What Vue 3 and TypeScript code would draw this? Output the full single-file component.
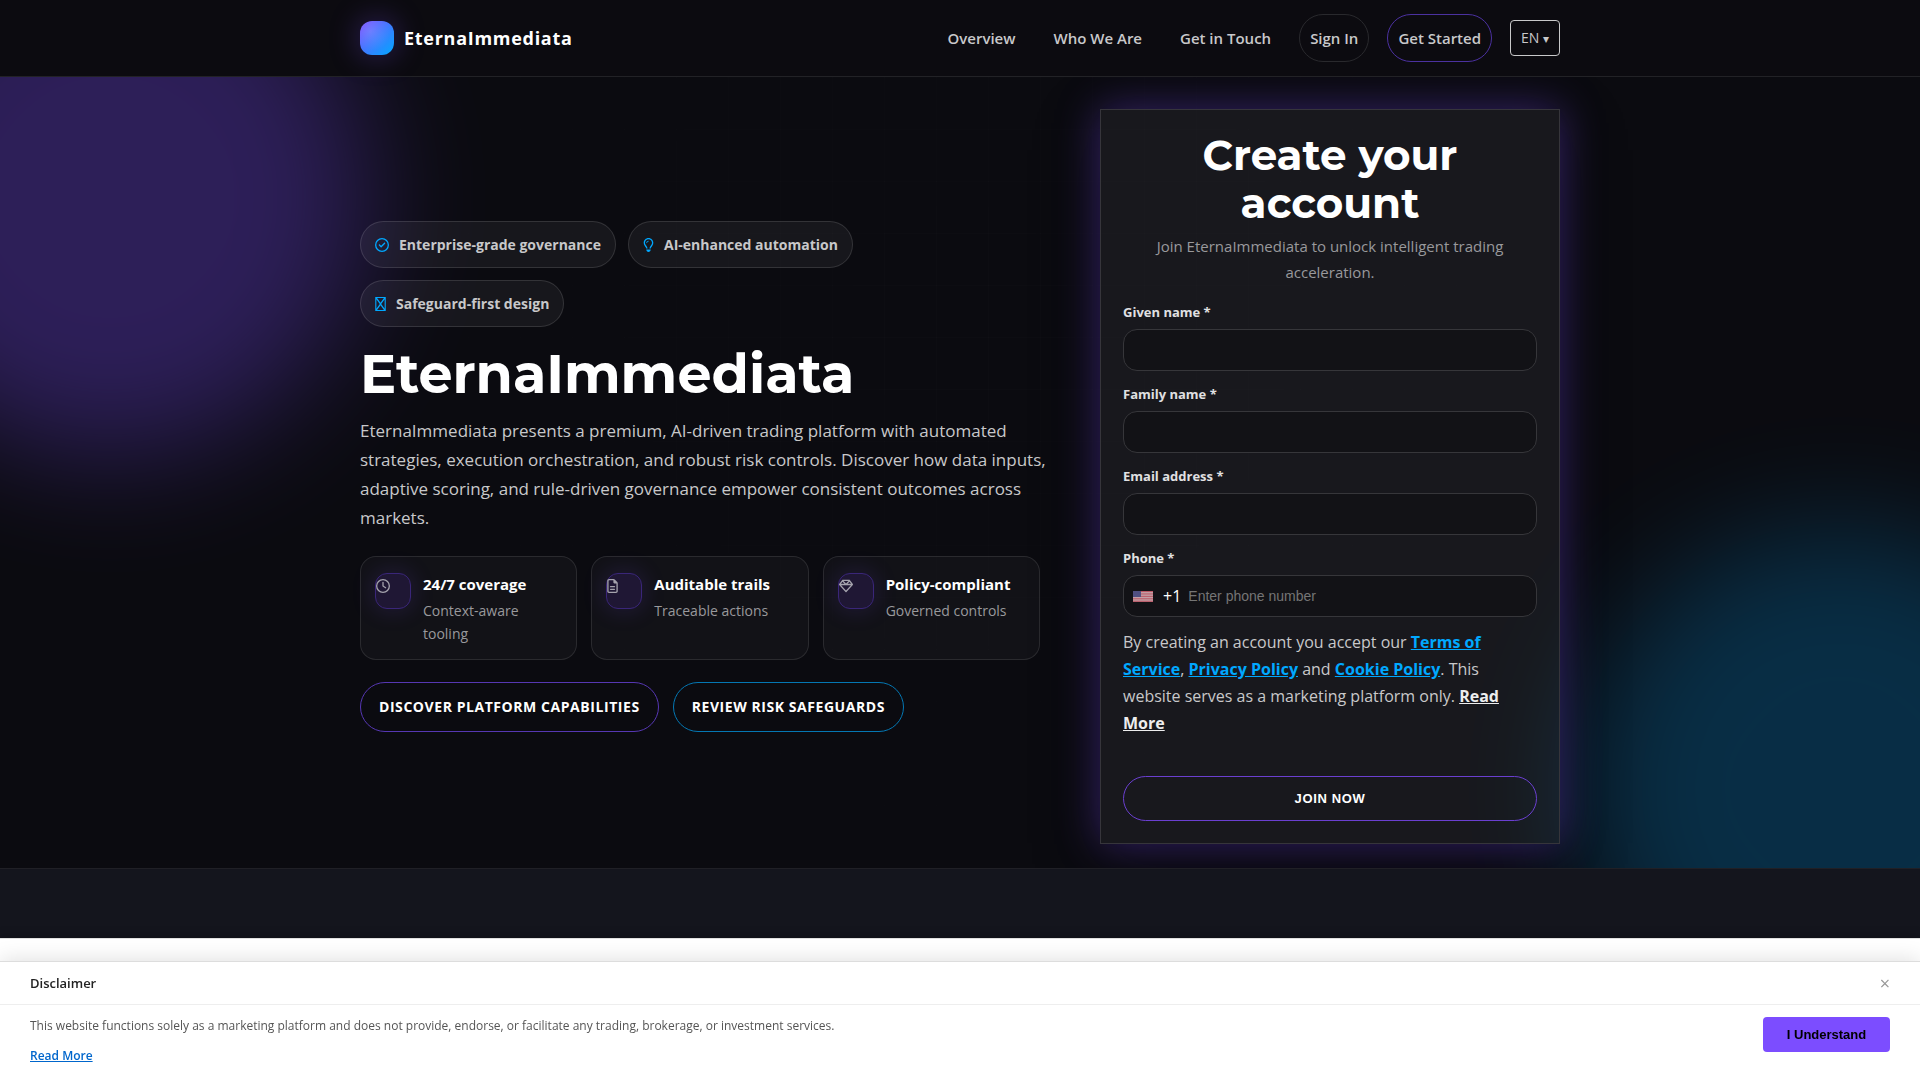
<script setup lang="ts">
import { ref } from 'vue'

interface Icon {
  viewBox: string
  width: number
  path: string
}

const icons: Record<string, Icon> = {
  check: {
    viewBox: '0 0 512 512',
    width: 14,
    path: 'M256 48a208 208 0 1 1 0 416 208 208 0 1 1 0-416zm0 464A256 256 0 1 0 256 0a256 256 0 1 0 0 512zM369 209c9.4-9.4 9.4-24.6 0-33.9s-24.6-9.4-33.9 0l-111 111-47-47c-9.4-9.4-24.6-9.4-33.9 0s-9.4 24.6 0 33.9l64 64c9.4 9.4 24.6 9.4 33.9 0L369 209z',
  },
  bulb: {
    viewBox: '0 0 384 512',
    width: 11,
    path: 'M297.2 248.9C311.6 228.3 320 203.2 320 176c0-70.7-57.3-128-128-128S64 105.3 64 176c0 27.2 8.4 52.3 22.8 72.9c3.7 5.3 8.1 11.3 12.8 17.7c12.9 17.7 28.3 38.9 39.8 59.8c10.4 19 15.7 38.8 18.3 57.5H109c-2.2-12-5.9-23.7-11.8-34.5c-9.9-18-22.2-34.9-34.5-51.8c-5.2-7.1-10.4-14.2-15.4-21.4C27.6 247.9 16 213.3 16 176C16 78.8 94.8 0 192 0s176 78.8 176 176c0 37.3-11.6 71.9-31.4 100.3c-5 7.2-10.2 14.3-15.4 21.4c-12.3 16.8-24.6 33.7-34.5 51.8c-5.9 10.8-9.6 22.5-11.8 34.5H226.4c2.6-18.7 7.9-38.6 18.3-57.5c11.5-20.9 26.9-42.1 39.8-59.8c4.7-6.4 9-12.4 12.7-17.7zM192 128c-26.5 0-48 21.5-48 48c0 8.8-7.2 16-16 16s-16-7.2-16-16c0-44.2 35.8-80 80-80c8.8 0 16 7.2 16 16s-7.2 16-16 16zm0 384c-44.2 0-80-35.8-80-80V416H272v16c0 44.2-35.8 80-80 80z',
  },
  box: {
    viewBox: '0 0 384 512',
    width: 11,
    path: 'M0 0H384V512H0zM66 40 192 214 318 40zM344 84 218 256 344 428zM318 472 192 298 66 472zM40 428 166 256 40 84z',
  },
  clock: {
    viewBox: '0 0 512 512',
    width: 14,
    path: 'M464 256A208 208 0 1 1 48 256a208 208 0 1 1 416 0zM0 256a256 256 0 1 0 512 0A256 256 0 1 0 0 256zM232 120V256c0 8 4 15.5 10.7 20l96 64c11 7.4 25.9 4.4 33.3-6.7s4.4-25.9-6.7-33.3L280 243.2V120c0-13.3-10.7-24-24-24s-24 10.7-24 24z',
  },
  file: {
    viewBox: '0 0 384 512',
    width: 11,
    path: 'M64 464c-8.8 0-16-7.2-16-16V64c0-8.8 7.2-16 16-16H224v80c0 17.7 14.3 32 32 32h80V448c0 8.8-7.2 16-16 16H64zM64 0C28.7 0 0 28.7 0 64V448c0 35.3 28.7 64 64 64H320c35.3 0 64-28.7 64-64V154.5c0-17-6.7-33.3-18.7-45.3L274.7 18.7C262.7 6.7 246.5 0 229.5 0H64zm56 256c-13.3 0-24 10.7-24 24s10.7 24 24 24H264c13.3 0 24-10.7 24-24s-10.7-24-24-24H120zm0 96c-13.3 0-24 10.7-24 24s10.7 24 24 24H264c13.3 0 24-10.7 24-24s-10.7-24-24-24H120z',
  },
  gem: {
    viewBox: '0 0 512 512',
    width: 14,
    path: 'M168.5 72L256 165l87.5-93h-175zM383.9 99.1L311.5 176h129L383.9 99.1zm50 124.9H256 78.1L256 420.3 433.9 224zM71.5 176h129L128.1 99.1 71.5 176zm434.3 40.1l-232 256c-4.5 5-11 7.9-17.8 7.9s-13.2-2.9-17.8-7.9l-232-256c-7.7-8.5-8.3-21.2-1.5-30.4l112-152c4.5-6.1 11.7-9.8 19.3-9.8H376c7.6 0 14.8 3.6 19.3 9.8l112 152c6.8 9.2 6.1 21.9-1.5 30.4z',
  },
}

const navLinks = ['Overview', 'Who We Are', 'Get in Touch']

const badges = [
  { icon: 'check', label: 'Enterprise-grade governance' },
  { icon: 'bulb', label: 'AI-enhanced automation' },
  { icon: 'box', label: 'Safeguard-first design' },
]

const stats = [
  { icon: 'clock', title: '24/7 coverage', text: 'Context-aware tooling' },
  { icon: 'file', title: 'Auditable trails', text: 'Traceable actions' },
  { icon: 'gem', title: 'Policy-compliant', text: 'Governed controls' },
]

const fields = [
  { id: 'given-name', label: 'Given name *', type: 'text' },
  { id: 'family-name', label: 'Family name *', type: 'text' },
  { id: 'email', label: 'Email address *', type: 'email' },
]

const form = ref<Record<string, string>>({})
const phone = ref('')
const noticeOpen = ref(true)
</script>

<template>
  <div class="page">
    <header class="header">
      <div class="container header-row">
        <a class="brand" href="#">
          <span class="brand-mark"></span>
          <span>EternaImmediata</span>
        </a>
        <nav class="nav">
          <a v-for="link in navLinks" :key="link" class="nav-link" href="#">{{ link }}</a>
          <a class="nav-link outlined" href="#">Sign In</a>
          <a class="nav-link outlined accent" href="#">Get Started</a>
          <button class="language" type="button">EN <span class="caret">▾</span></button>
        </nav>
      </div>
    </header>

    <section class="hero">
      <div class="glow glow-purple"></div>
      <div class="glow glow-blue"></div>
      <div class="grid-lines"></div>
      <div class="container hero-row">
        <div class="intro">
          <div class="badges">
            <span v-for="badge in badges" :key="badge.label" class="badge">
              <svg :viewBox="icons[badge.icon].viewBox" :width="icons[badge.icon].width" height="14" aria-hidden="true">
                <path :d="icons[badge.icon].path" fill="currentColor" fill-rule="evenodd" />
              </svg>
              {{ badge.label }}
            </span>
          </div>
          <h1>EternaImmediata</h1>
          <p class="lead">
            EternaImmediata presents a premium, AI-driven trading platform with automated strategies, execution
            orchestration, and robust risk controls. Discover how data inputs, adaptive scoring, and rule-driven
            governance empower consistent outcomes across markets.
          </p>
          <div class="stats">
            <div v-for="stat in stats" :key="stat.title" class="stat">
              <span class="stat-icon">
                <svg :viewBox="icons[stat.icon].viewBox" :width="icons[stat.icon].width" height="14" aria-hidden="true">
                  <path :d="icons[stat.icon].path" fill="currentColor" fill-rule="evenodd" />
                </svg>
              </span>
              <div>
                <div class="stat-title">{{ stat.title }}</div>
                <div class="stat-text">{{ stat.text }}</div>
              </div>
            </div>
          </div>
          <div class="actions">
            <a class="action" href="#">Discover platform capabilities</a>
            <a class="action blue" href="#">Review risk safeguards</a>
          </div>
        </div>

        <form class="signup" @submit.prevent>
          <h2>Create your account</h2>
          <p class="signup-sub">Join EternaImmediata to unlock intelligent trading acceleration.</p>
          <div v-for="field in fields" :key="field.id" class="field">
            <label :for="field.id">{{ field.label }}</label>
            <input :id="field.id" v-model="form[field.id]" class="control" :type="field.type" />
          </div>
          <div class="field">
            <label for="phone">Phone *</label>
            <div class="control phone">
              <svg class="flag" viewBox="0 0 20 11" width="20" height="11" aria-hidden="true">
                <rect width="20" height="11" fill="#f4e9ec" />
                <path
                  d="M0 .5h20M0 2.2h20M0 3.9h20M0 5.6h20M0 7.3h20M0 9h20M0 10.6h20"
                  stroke="#e0485c"
                  stroke-width=".8"
                />
                <rect width="8" height="6" fill="#5f5f9c" />
              </svg>
              <span class="dial">+1</span>
              <input id="phone" v-model="phone" type="tel" placeholder="Enter phone number" />
            </div>
          </div>
          <p class="consent">
            By creating an account you accept our <a href="#">Terms of Service</a>, <a href="#">Privacy Policy</a> and
            <a href="#">Cookie Policy</a>. This website serves as a marketing platform only.
            <a class="more" href="#">Read More</a>
          </p>
          <button class="join" type="submit">Join now</button>
        </form>
      </div>
    </section>

    <section class="next"></section>

    <aside v-if="noticeOpen" class="notice">
      <div class="notice-panel">
        <div class="notice-head">
          <strong>Disclaimer</strong>
          <button class="close" type="button" aria-label="Close" @click="noticeOpen = false">×</button>
        </div>
        <div class="notice-body">
          <div>
            <p>
              This website functions solely as a marketing platform and does not provide, endorse, or facilitate any
              trading, brokerage, or investment services.
            </p>
            <a href="#">Read More</a>
          </div>
          <button class="understand" type="button" @click="noticeOpen = false">I Understand</button>
        </div>
      </div>
    </aside>
  </div>
</template>

<style>
body {
  background: #0b0b10;
}
</style>

<style scoped>
* {
  box-sizing: border-box;
}

.page {
  display: flex;
  flex-direction: column;
  min-height: 100vh;
  color: #c8c8ca;
  font: 16px/27px 'Open Sans', 'Noto Sans', sans-serif;
}

a {
  color: inherit;
  text-decoration: none;
}

h1,
h2,
p {
  margin: 0;
}

.container {
  width: 100%;
  max-width: 1200px;
  margin: 0 auto;
}

.header {
  position: relative;
  z-index: 2;
  padding: 14px 0;
  background: #0c0b10;
  border-bottom: 1px solid #222226;
}

.header-row,
.nav,
.brand {
  display: flex;
  align-items: center;
}

.header-row {
  justify-content: space-between;
}

.brand {
  gap: 10px;
  color: #fff;
  font-size: 18px;
  font-weight: 700;
  letter-spacing: 0.04em;
}

.brand-mark {
  width: 34px;
  height: 34px;
  border-radius: 12px;
  background:
    radial-gradient(circle at 30% 30%, rgba(255, 255, 255, 0.14), transparent 60%),
    linear-gradient(135deg, #7c4dff, #00a8ff);
  box-shadow: 0 0 30px rgba(124, 77, 255, 0.35);
}

.nav {
  gap: 18px;
}

.nav-link {
  padding: 10px;
  font-size: 15px;
  font-weight: 600;
  line-height: 26px;
}

.outlined {
  border: 1px solid #29292d;
  border-radius: 24px;
}

.accent {
  border-color: #4b31a0;
}

.language {
  height: 36px;
  padding: 0 10px;
  border: 1px solid #c8c8ca;
  border-radius: 4px;
  background: transparent;
  color: inherit;
  font: 14px/24px 'Open Sans', sans-serif;
}

.caret {
  font-size: 12px;
}

.hero {
  position: relative;
  overflow: hidden;
  padding: 32px 0 24px;
}

.glow {
  position: absolute;
  width: 520px;
  height: 520px;
  border-radius: 50%;
  filter: blur(60px);
}

.glow-purple {
  top: -140px;
  left: -150px;
  background: #7c4dff;
  opacity: 0.3;
}

.glow-blue {
  right: -180px;
  bottom: -180px;
  background: #00a8ff;
  opacity: 0.22;
}

.grid-lines {
  position: absolute;
  inset: 0;
  background:
    linear-gradient(rgba(255, 255, 255, 0.012) 1px, transparent 1px) 0 0 / 52px 52px,
    linear-gradient(90deg, rgba(255, 255, 255, 0.012) 1px, transparent 1px) 0 0 / 52px 52px;
  mask-image: radial-gradient(circle at 50% 30%, #000, transparent 60%);
}

.hero-row {
  position: relative;
  display: grid;
  grid-template-columns: minmax(0, 1fr) 460px;
  gap: 60px;
  align-items: center;
}

.badges,
.actions {
  display: flex;
  flex-wrap: wrap;
}

.badges {
  gap: 12px;
}

.badge {
  display: flex;
  align-items: center;
  gap: 10px;
  padding: 10px 14px;
  border: 1px solid rgba(255, 255, 255, 0.12);
  border-radius: 24px;
  background: rgba(255, 255, 255, 0.05);
  font-size: 14px;
  font-weight: 700;
  line-height: 25px;
}

.badge svg {
  color: #00a8ff;
}

h1,
h2 {
  color: #fff;
  font-family: Montserrat, Inter, sans-serif;
  font-weight: 700;
}

h1 {
  margin: 17px 0 12px;
  font-size: 54px;
  line-height: 60px;
}

.lead {
  margin-right: -10px;
  font-size: 17px;
  line-height: 29px;
}

.stats {
  display: grid;
  grid-template-columns: repeat(3, minmax(0, 1fr));
  gap: 14px;
  margin: 24px 0 22px;
}

.stat {
  display: flex;
  gap: 12px;
  padding: 14px;
  border: 1px solid rgba(255, 255, 255, 0.1);
  border-radius: 16px;
  background: rgba(255, 255, 255, 0.03);
}

.stat-icon {
  flex: none;
  width: 36px;
  height: 36px;
  margin-top: 2px;
  padding-top: 5px;
  border: 1px solid #3a2679;
  border-radius: 12px;
  background: #1f1734;
  box-shadow: 0 0 24px rgba(124, 77, 255, 0.18);
  color: #a5a3ad;
}

.stat-icon svg {
  display: block;
}

.stat-title {
  color: #fff;
  font-size: 15px;
  font-weight: 700;
  line-height: 26px;
}

.stat-text {
  margin-top: 2px;
  color: #99999c;
  font-size: 14px;
  line-height: 23px;
}

.actions {
  gap: 14px;
}

.action {
  padding: 12px 18px;
  border: 1px solid #5637b3;
  border-radius: 25px;
  color: #fff;
  font-size: 14px;
  font-weight: 700;
  line-height: 24px;
  letter-spacing: 0.04em;
  text-transform: uppercase;
}

.blue {
  border-color: #0477b3;
}

.signup {
  padding: 21px 22px 22px;
  border: 1px solid #36353b;
  background: rgba(255, 255, 255, 0.055);
  box-shadow:
    0 0 40px rgba(124, 77, 255, 0.38),
    0 20px 60px rgba(0, 0, 0, 0.4);
}

h2 {
  font-size: 42px;
  line-height: 48px;
  text-align: center;
}

.signup-sub {
  margin: 6px 0 16px;
  color: #99999c;
  font-size: 15px;
  line-height: 26px;
  text-align: center;
}

.field {
  margin-bottom: 12px;
}

label {
  display: block;
  margin-bottom: 6px;
  color: #e0e0e2;
  font-size: 13px;
  font-weight: 700;
  line-height: 22px;
}

.control {
  display: block;
  width: 100%;
  height: 42px;
  border: 1px solid #36363a;
  border-radius: 14px;
  background: #121216;
  color: #fff;
}

input.control {
  padding: 0 14px;
  font: 14px/20px 'Liberation Sans', Arial, sans-serif;
}

.phone {
  display: flex;
  align-items: center;
  padding: 0 9px;
}

.flag {
  opacity: 0.8;
}

.dial {
  margin: 0 7px 0 10px;
}

.phone input {
  flex: 1;
  min-width: 0;
  padding: 0;
  border: 0;
  outline: 0;
  background: none;
  color: inherit;
  font: 14px/20px 'Liberation Sans', Arial, sans-serif;
}

.phone input::placeholder {
  color: #757575;
}

.consent a {
  color: #00a8ff;
  font-weight: 700;
  text-decoration: underline;
}

.consent .more {
  color: #ededee;
}

.join {
  display: block;
  width: 100%;
  height: 45px;
  margin-top: 39px;
  border: 1px solid #6a3fd0;
  border-radius: 23px;
  background: transparent;
  color: #fff;
  font: bold 13px/20px 'Liberation Sans', Arial, sans-serif;
  letter-spacing: 0.05em;
  text-transform: uppercase;
}

.next {
  flex: 1;
  min-height: 212px;
  border-top: 1px solid #202026;
  background: #14151d;
}

.notice {
  position: fixed;
  right: 0;
  bottom: 0;
  left: 0;
  z-index: 5;
  padding-top: 22px;
  border-top: 1px solid #e0e0e0;
  background: #fff;
  box-shadow: 0 -2px 10px rgba(0, 0, 0, 0.2);
}

.notice-panel {
  border-top: 1px solid #ddd;
  background: #fff;
  box-shadow: 0 -2px 20px rgba(0, 0, 0, 0.12);
}

.notice-head,
.notice-body {
  display: flex;
  justify-content: space-between;
  padding: 0 30px;
}

.notice-head {
  align-items: center;
  height: 43px;
  border-bottom: 1px solid #eee;
  color: #222;
  font-size: 13px;
}

.notice-head strong {
  font-weight: 600;
}

.close {
  padding: 0;
  border: 0;
  background: none;
  color: #999;
  font: 18px/20px 'Open Sans', sans-serif;
}

.notice-body {
  align-items: flex-start;
  padding-top: 12px;
  padding-bottom: 14px;
  color: #555;
  font-size: 12px;
  line-height: 18px;
}

.notice-body p {
  margin-bottom: 11px;
}

.notice-body a {
  display: inline-block;
  color: #06c;
  font-weight: 600;
  line-height: 20px;
  text-decoration: underline;
}

.understand {
  flex: none;
  width: 127px;
  height: 35px;
  border: 0;
  border-radius: 4px;
  background: #7c4dff;
  color: #000;
  font: bold 13px/20px 'Liberation Sans', Arial, sans-serif;
}

@media (max-width: 1240px) {
  .container {
    padding: 0 20px;
  }
}

@media (max-width: 1000px) {
  .header-row,
  .nav {
    flex-wrap: wrap;
  }

  .hero-row {
    grid-template-columns: minmax(0, 1fr);
  }

  .lead {
    margin-right: 0;
  }
}
</style>
